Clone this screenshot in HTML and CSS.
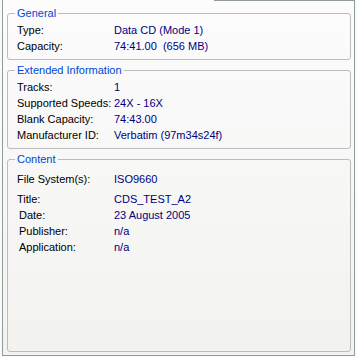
FILE: index.html
```html
<!DOCTYPE html>
<html lang="en">
<head>
    <meta charset="UTF-8">
    <title>Disc Information</title>
    <link rel="stylesheet" href="styles.css">
</head>
<body>
    <div class="tab-page">
        <fieldset class="group">
            <legend>General</legend>
            <div class="row"><span class="label">Type:</span><span class="value">Data CD (Mode 1)</span></div>
            <div class="row"><span class="label">Capacity:</span><span class="value">74:41.00&nbsp; (656 MB)</span></div>
        </fieldset>

        <fieldset class="group">
            <legend>Extended Information</legend>
            <div class="row"><span class="label">Tracks:</span><span class="value">1</span></div>
            <div class="row"><span class="label">Supported Speeds:</span><span class="value">24X - 16X</span></div>
            <div class="row"><span class="label">Blank Capacity:</span><span class="value">74:43.00</span></div>
            <div class="row"><span class="label">Manufacturer ID:</span><span class="value">Verbatim (97m34s24f)</span></div>
        </fieldset>

        <fieldset class="group content">
            <legend>Content</legend>
            <div class="row fs"><span class="label">File System(s):</span><span class="value">ISO9660</span></div>
            <div class="row"><span class="label">Title:</span><span class="value">CDS_TEST_A2</span></div>
            <div class="row"><span class="label indent">Date:</span><span class="value">23 August 2005</span></div>
            <div class="row"><span class="label indent">Publisher:</span><span class="value">n/a</span></div>
            <div class="row"><span class="label indent">Application:</span><span class="value">n/a</span></div>
        </fieldset>
    </div>
</body>
</html>
```

FILE: styles.css
```css
html, body {
    margin: 0;
    padding: 0;
    background: #fafafa;
}

body {
    font-family: "Liberation Sans", Arial, sans-serif;
    font-size: 11px;
    color: #000;
}

.tab-page {
    position: relative;
    box-sizing: border-box;
    margin-left: 2px;
    width: 353px;
    height: 356px;
    border: 1px solid #919b9c;
    border-top: none;
    background: linear-gradient(#fcfcfd, #f2f2ef);
    padding: 7px 3px 3px 4px;
    display: flex;
    flex-direction: column;
    gap: 4px;
}

/* top edge only right of the selected tab */
.tab-page::before {
    content: "";
    position: absolute;
    top: 0;
    left: 211px;
    right: -1px;
    height: 1px;
    background: #919b9c;
}

.group {
    margin: 0;
    padding: 0 4px 5px 9px;
    border: 1px solid #bcbcbc;
    border-radius: 3px;
    min-width: 0;
}

.group legend {
    padding: 0 2px;
    margin-left: -2px;
    line-height: 13px;
    color: #0046d5;
}

.content {
    flex: 1;
}

.row {
    display: flex;
    height: 16px;
    line-height: 16px;
}

.group legend + .row {
    margin-top: 2px;
}

.content legend + .row {
    margin-top: 5px;
}

.row.fs {
    margin-bottom: 4px;
}

.label {
    width: 97px;
    flex-shrink: 0;
}

.label.indent {
    padding-left: 2px;
    width: 95px;
}

.value {
    color: #000080;
}
```
